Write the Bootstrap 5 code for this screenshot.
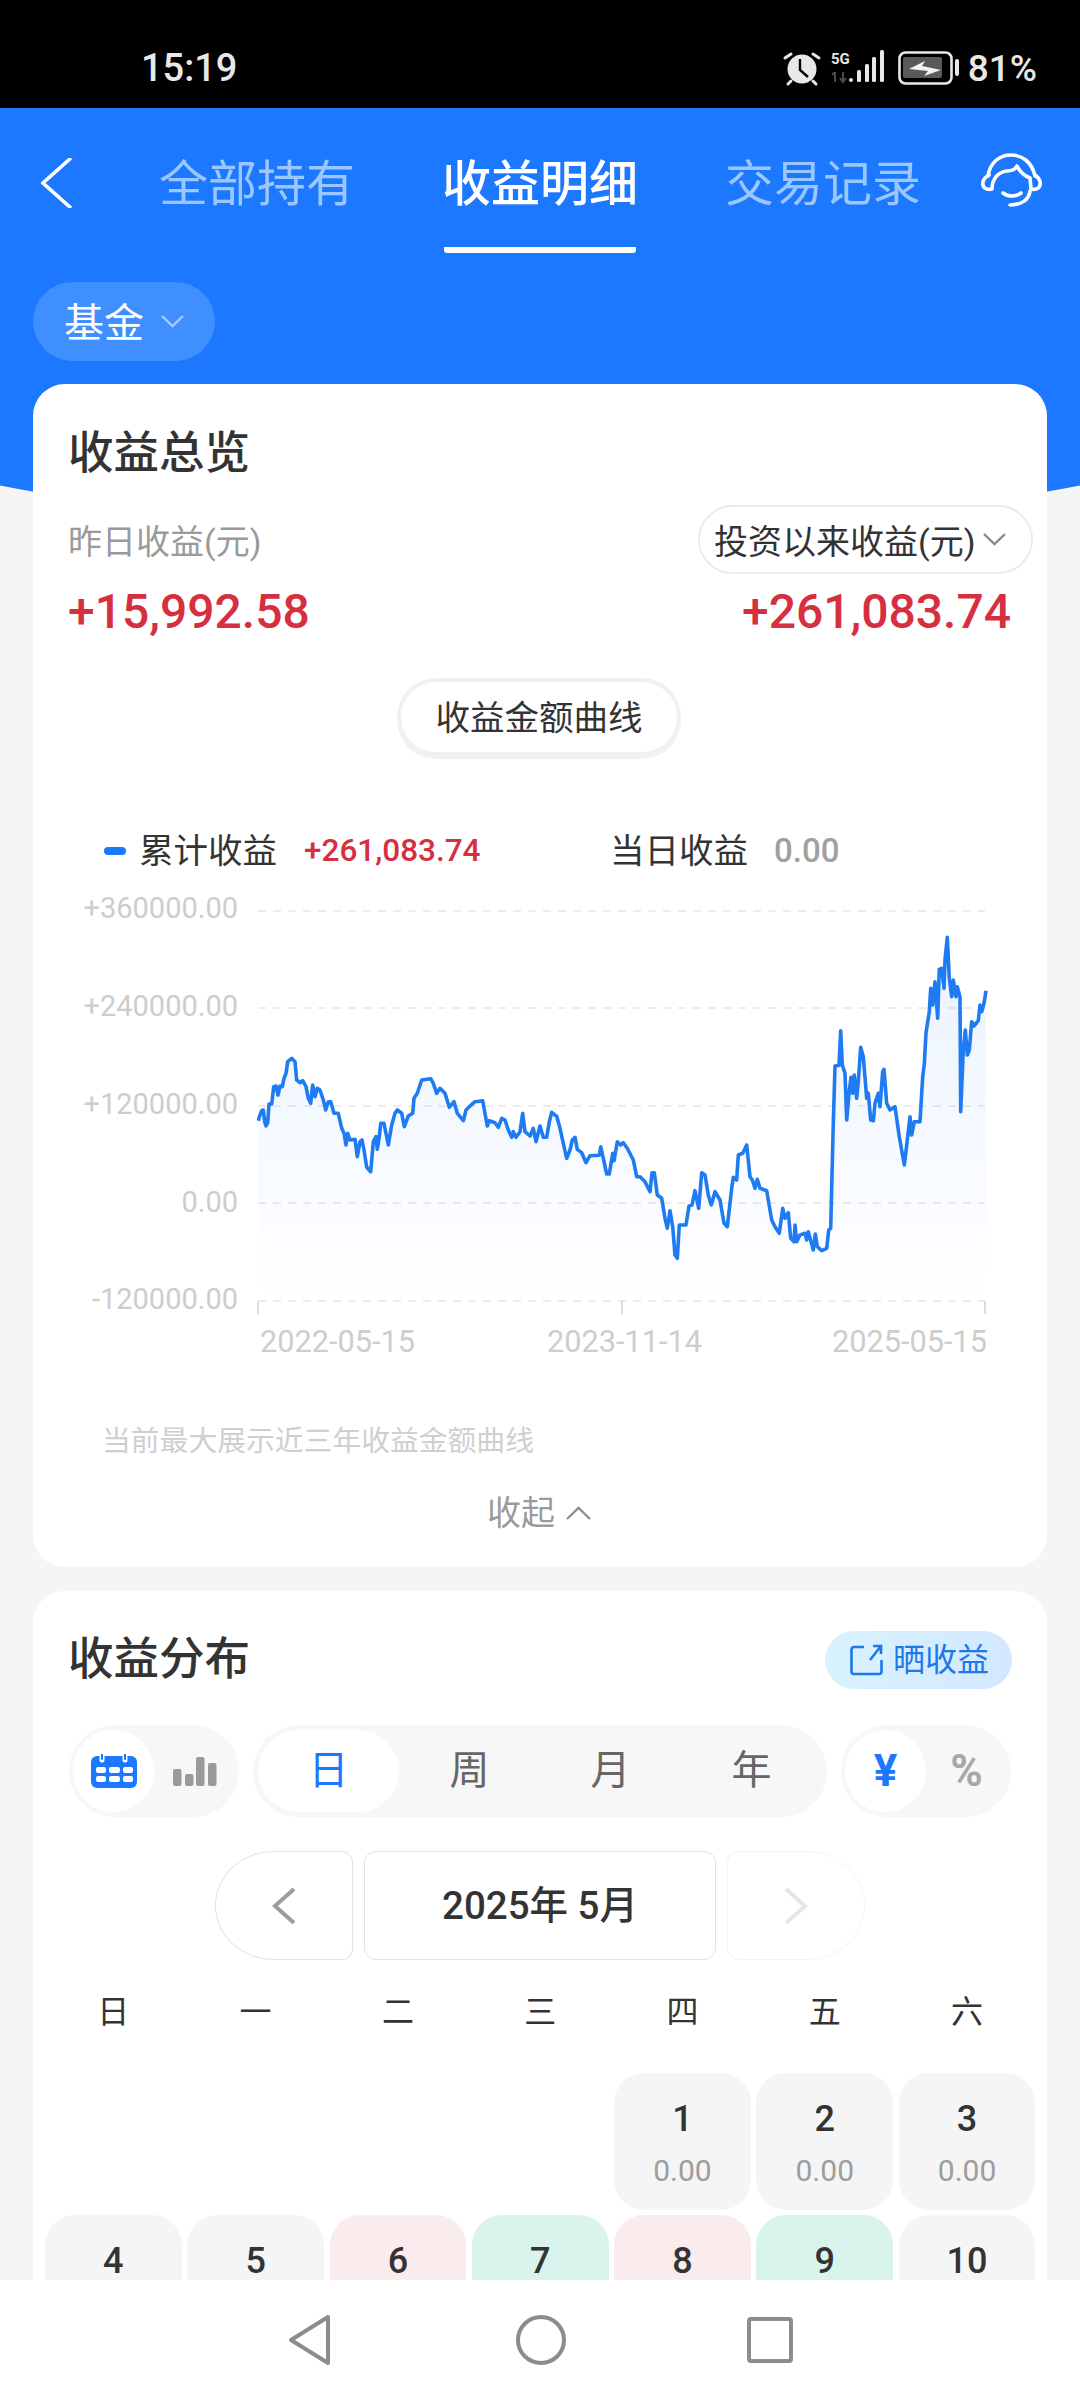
<!doctype html>
<html lang="zh-CN">
<head>
<meta charset="utf-8">
<title>收益明细</title>
<link href="https://cdn.jsdelivr.net/npm/bootstrap@5.3.0/dist/css/bootstrap.min.css" rel="stylesheet">
<style>
html,body{margin:0;background:#f5f5f5}
body{font-family:Roboto,"Noto Sans CJK SC",sans-serif;color:#333;width:1080px;height:2400px;overflow:hidden}
.app-shell{width:1080px;height:2400px}
.status-strip{height:108px;background:#000;color:#e8e8e8;padding:26px 43px 0 141px;flex:none}
.status-time{font-size:38px;font-weight:500;line-height:1;padding-top:2px}
.status-batt{font-size:37px;font-weight:500;line-height:1;margin-left:6px;padding-top:2px}
.scroll-area{flex:1 1 auto;min-height:0;overflow:hidden;background:#f5f5f5}
.blue-arc{position:absolute;left:-260px;top:0;width:1600px;height:422px;background:#1b78ff;border-radius:0 0 50% 50%/0 0 170px 170px}
.layer{z-index:1}
.tab-row{padding:50px 0 0 41px}
.tab-back{width:32px;height:50px;margin-right:88px;display:block}
.tab-item{font-size:49px;line-height:50px;width:192px;text-align:center;padding:2px 0 37px;border-bottom:6px solid transparent;color:#9cc6ff;margin-right:91px;white-space:nowrap;display:flex;justify-content:center}
.tab-item.is-on{color:#fff;font-weight:500;border-bottom-color:#fff;border-radius:0 0 3px 3px}
.tab-item.is-last{margin-right:62px}
.head-icon{margin-top:-5px}
.fund-pill{margin:29px 0 23px 33px;width:182px;height:79px;background:#408fff;color:#fff;font-size:40px;border:0;padding:5px 0 0 0;gap:17px}
.fund-pill svg{margin-top:-5px}
.fund-pill:hover{background:#408fff;color:#fff}
.panel{margin:0 33px;border-radius:32px;border:0;background:#fff}
.panel-a{padding:40px 37px 32px 35px}
.panel-b{margin-top:24px;padding:39px 12px 0}
.panel-title{font-size:45.500px;line-height:60px;font-weight:500;color:#333;margin:0}
.pick-row{margin-top:21px;height:69px}
.muted-label{font-size:34px;color:#9a9a9a;padding-top:5px}
.pick-pill{width:335px;height:69px;margin-right:-23px;border:2px solid #ececec;background:#fff;font-size:34px;color:#333;padding:5px 0 0 14px;gap:8px;white-space:nowrap}
.pick-pill svg{margin-top:-5px}
.big-row{margin:8px -1px 0 0;font-size:48px;line-height:60px;font-weight:500;color:#d62f40}
.curve-pill{width:276px;height:70px;margin:40px auto 0;background:#fff;font-size:34.500px;color:#333;border:0;padding:3px 0 0;box-shadow:0 0 0 4px #f1f1f1,0 3px 0 4px #f1f1f1}
.legend-row{margin:77px 0 0 36px;height:44px;font-size:34.500px;line-height:44px}
.legend-dot{width:22px;height:8px;border-radius:4px;background:#1b78ff;margin-right:13px}
.legend-red{font-size:31.500px;color:#d62f40;font-weight:500;margin-left:27px;width:306px}
.legend-zero{font-size:33px;color:#a0a0a0;font-weight:500;margin-left:26px}
.chart-box{display:block;width:1014px;height:490px;margin:7px -37px 0 -35px}
.chart-box text{font-family:Roboto,sans-serif;font-size:29px;fill:#cdcdcd}
.chart-box text.axis-date{font-size:30.700px}
.chart-note{margin:51px 0 0 34px;font-size:28.800px;line-height:40px;color:#cfcfcf}
.fold-row{margin-top:30px;font-size:34px;line-height:44px;color:#9a9a9a;gap:11px}
.share-pill{width:187px;height:58px;background:linear-gradient(90deg,#d9f2ff,#d3e8ff);color:#1f78e8;font-size:32px;border:0;padding:0 0 0 2px;gap:10px;margin-right:23px}
.head-row{padding-left:23px;height:60px}
.head-row .panel-title{line-height:56px}
.seg-wrap{padding:0 23px 0 24px;margin-top:35px;gap:14px}
.seg-group{height:92px;background:#f7f7f7;border-radius:46px;padding:5px 4px}
.seg-group.seg-mid{padding:5px}
.seg-cell{width:81px;height:82px;border-radius:41px;color:#666;font-size:40px}
.seg-wide{width:141px}
.seg-cell.is-on{background:#fff;color:#1b78ff}
.seg-sym{font-weight:700;font-size:44px;color:#a8a8a8}
.seg-sym.is-on{color:#1b78ff}
.date-row{margin-top:34px;gap:11px;height:109px}
.date-cell{width:352px;border:1px solid #e2e2e2;border-radius:12px;font-size:38.500px;font-weight:500;color:#333}
.date-side{width:138px;border:1px solid #e2e2e2}
.date-prev{border-radius:60px 12px 12px 60px/56px 12px 12px 56px}
.date-next{border-color:#f4f4f4;border-radius:12px 60px 60px 12px/12px 56px 56px 12px}
.week-grid,.day-grid{display:grid;grid-template-columns:repeat(7,136.700px);column-gap:5.600px}
.week-grid{margin-top:30px;font-size:32px;line-height:44px;text-align:center;color:#333}
.day-grid{margin-top:39px;row-gap:5px}
.day-cell{height:137px;border-radius:30px;background:#f5f5f5;text-align:center;padding-top:26px}
.day-num{font-size:36px;line-height:40px;font-weight:500;color:#333}
.day-val{font-size:30px;line-height:36px;color:#9d9d9d;margin-top:14px}
.tone-red{background:#faebed}
.tone-green{background:#d9f4ec}
.soft-nav{height:120px;background:#fff;flex:none}
.nav-mark-a{margin-right:183px}
.nav-mark-c{margin-left:180px}
</style>
</head>
<body>
<div class="app-shell d-flex flex-column">
  <div class="status-strip d-flex align-items-center">
    <span class="status-time">15:19</span>
    <svg class="ms-auto" width="180" height="40" viewBox="780 45 180 40" aria-hidden="true">
      <circle cx="800" cy="67" r="14.500" fill="#e8e8e8"/>
      <path d="M798 57v11l8 7" fill="none" stroke="#000" stroke-width="2.400"/>
      <path d="M783 56l6-4M817 56l-6-4M789 79l-3 3M811 79l3 3" stroke="#e8e8e8" stroke-width="3" stroke-linecap="round"/>
      <text x="829" y="62" fill="#e8e8e8" font-family="Roboto,sans-serif" font-weight="700" font-size="15">5G</text>
      <path d="M833 70v10M830 73l3-3M841 70v10M838 76l3 4 3-4" fill="none" stroke="#4a4a4a" stroke-width="2"/>
      <g fill="#e8e8e8"><rect x="847" y="76" width="4" height="4" rx="2"/><rect x="855" y="68" width="4" height="12" rx="1.500"/><rect x="863" y="62" width="4" height="18" rx="1.500"/><rect x="870" y="55" width="4" height="25" rx="1.500"/><rect x="878" y="48" width="4" height="32" rx="1.500"/></g>
      <rect x="897.500" y="50.500" width="52" height="31" rx="6" fill="none" stroke="#e8e8e8" stroke-width="2.600"/>
      <rect x="901" y="55" width="39" height="21" rx="2" fill="#5a5a5a"/>
      <path d="M907 67l16-8-3 5 19 4-17 6 4-5z" fill="#f2f2f2"/>
      <rect x="953" y="57" width="4" height="17" rx="2" fill="#e8e8e8"/>
    </svg>
    <span class="status-batt">81%</span>
  </div>

  <div class="scroll-area position-relative">
    <div class="blue-arc"></div>
    <div class="layer position-relative">
      <div class="tab-row d-flex align-items-start">
        <svg class="tab-back" viewBox="0 0 32 50" aria-hidden="true"><path d="M30 0L2 25l28 25" fill="none" stroke="#fff" stroke-width="3.600"/></svg>
        <div class="tab-item">全部持有</div>
        <div class="tab-item is-on">收益明细</div>
        <div class="tab-item is-last">交易记录</div>
        <svg class="head-icon" width="62" height="56" viewBox="0 0 62 56" aria-hidden="true">
          <g fill="none" stroke="#fff" stroke-width="3.600" stroke-linecap="round" stroke-linejoin="round">
            <path d="M7 23C9 9 19 2 30 2s21 7 24 21"/>
            <path d="M8 22C3 25 1 28 2 32c1 4 5 5 9 4 0-10 6-17 15-18 4 0 8-1 10-5 3 6 8 10 13 12l1 11c4 1 8 0 9-4 1-4-1-7-5-10"/>
            <path d="M22 40c5 4 13 4 18 0"/>
            <path d="M49 38c-1 9-9 14-20 14"/>
          </g>
        </svg>
      </div>
      <button type="button" class="btn rounded-pill fund-pill d-flex align-items-center justify-content-center">基金
        <svg width="23" height="13" viewBox="0 0 23 13" aria-hidden="true"><path d="M1 1l10.500 10L22 1" fill="none" stroke="#a9cdff" stroke-width="2.400"/></svg>
      </button>

      <section class="card panel panel-a">
        <h2 class="panel-title">收益总览</h2>
        <div class="pick-row d-flex justify-content-between align-items-center">
          <span class="muted-label">昨日收益(元)</span>
          <button type="button" class="btn rounded-pill pick-pill d-flex align-items-center">投资以来收益(元)
            <svg width="23" height="13" viewBox="0 0 23 13" aria-hidden="true"><path d="M1 1l10.500 10L22 1" fill="none" stroke="#8a8a8a" stroke-width="2.400"/></svg>
          </button>
        </div>
        <div class="big-row d-flex justify-content-between"><span>+15,992.58</span><span>+261,083.74</span></div>
        <button type="button" class="btn rounded-pill curve-pill d-block">收益金额曲线</button>
        <div class="legend-row d-flex align-items-center">
          <span class="legend-dot"></span><span>累计收益</span>
          <span class="legend-red">+261,083.74</span><span>当日收益</span><span class="legend-zero">0.00</span>
        </div>
        <svg class="chart-box" viewBox="33 880 1014 490" role="img" aria-label="收益金额曲线">
          <defs>
            <linearGradient id="areaFill" gradientUnits="userSpaceOnUse" x1="0" y1="940" x2="0" y2="1301">
              <stop offset="0" stop-color="#1b78ff" stop-opacity=".09"/>
              <stop offset="1" stop-color="#1b78ff" stop-opacity="0"/>
            </linearGradient>
          </defs>
          <g stroke="#e6e6e6" stroke-width="1.600" stroke-dasharray="8 7">
            <path d="M258 911H985M258 1008H985M258 1106H985M258 1203H985M258 1301H985"/>
          </g>
          <path d="M258 1301v13M622 1301v13M985 1301v13" stroke="#dcdcdc" stroke-width="2"/>
          <g text-anchor="end">
            <text x="238" y="918">+360000.00</text>
            <text x="238" y="1016">+240000.00</text>
            <text x="238" y="1114">+120000.00</text>
            <text x="238" y="1212">0.00</text>
            <text x="238" y="1309">-120000.00</text>
          </g>
          <text class="axis-date" x="260" y="1352">2022-05-15</text>
          <text class="axis-date" x="547" y="1352">2023-11-14</text>
          <text class="axis-date" x="832" y="1352">2025-05-15</text>
          <path fill="url(#areaFill)" d="M258.300 1120.700L260 1115 261.700 1110.700 263.300 1110 264.700 1121.700 266 1126 267.700 1122.700 269 1104 271.700 1104 273.700 1086.700 276 1086 278 1095 280 1086 282.300 1086.700 284 1078.300 286 1073.300 287.700 1061.700 291.700 1058.300 295 1061.700 296.700 1080 300 1082.700 302.700 1080.700 306 1086.700 308.300 1098.300 310.700 1103.300 312.700 1085 315 1096.700 317.300 1088.300 320 1090 323.300 1100 325.700 1110 328.300 1101.700 330.700 1101.700 334 1113.300 338.300 1113.300 341.700 1128.300 344 1133.300 346 1145 347.700 1133.300 350 1140 355 1139.300 357.300 1156.700 360 1141.700 362 1140 364 1150 366.700 1167.300 370.700 1171.700 373.300 1141.700 376 1136.700 377.300 1149.300 379.300 1136.700 380.700 1123.300 384 1123.300 388.300 1145 391.700 1125 395 1113.300 397.300 1110 401.700 1113.300 404.300 1126.700 408.300 1116 412.700 1113.300 414 1098.300 417.300 1093.300 421.700 1080 430.700 1078.700 433.300 1083.300 436.700 1093.300 440 1088.300 445 1093.300 449.300 1107.300 454 1101.700 457.300 1113.300 463.300 1120.700 466 1110 469.300 1106.700 475 1101.700 482.700 1100.700 487.300 1126 489.300 1120.700 495 1122.700 498.300 1127.300 501.700 1118.300 505 1120 508.300 1130 511.700 1137.300 513.300 1131.700 516 1137.300 520 1131.700 522.700 1113.300 525 1131.700 530 1136 533.300 1128.300 536 1141.700 540 1126 543.300 1137.300 546.700 1137.300 549.300 1121.700 551.700 1112.300 556.700 1116.300 560 1128.300 563.300 1143.300 566.700 1158.300 570 1150 572.300 1140 575 1137.300 577.300 1149.300 581.700 1152.700 586 1162.700 590 1155.700 599.300 1155.300 600.700 1146.700 603.300 1158.300 606.700 1174 609.300 1174 612.700 1153.300 614 1160.700 617.300 1141.700 620.700 1145 623.300 1142.700 627.300 1148.300 633.300 1160 636.700 1176.700 640 1176.700 645 1181.700 650 1191.700 652 1172.700 654.300 1172.700 657.300 1195 661.700 1198.300 665 1218.300 667.300 1228.300 670 1210.700 672.700 1226.700 675 1255 677.300 1258.300 679.300 1225 686 1225 689 1206 692 1205 695 1190.700 698.700 1208.300 701.700 1172.700 705 1175 708.300 1195 711.300 1205 715 1191.700 720 1200 724 1223.300 727.300 1226.700 731.700 1188.300 733.300 1177.300 736.700 1180 738.300 1155 742.700 1153.300 746.700 1145 750 1176.700 752.300 1180 755 1188.300 757.300 1179.300 760 1188.300 766.700 1190.700 771.700 1220 775 1226.700 779.300 1233.300 782.700 1208.300 785 1218.300 788.300 1212.700 790.700 1238.300 794 1241.700 795 1225 796.700 1241.700 800 1235 805 1233.300 806.700 1240 808.300 1231.700 813.300 1250 815.300 1234 817.300 1246.700 821.700 1250.700 826.700 1248.300 828.700 1230 830.700 1228.300 833.300 1123.300 835 1066 839 1065.300 840.700 1030.700 842.300 1065 845 1073.300 846.700 1120 849 1093.300 851 1077.300 852.700 1093.300 854.300 1075 856.700 1098.300 858.300 1081.700 860.700 1047.300 863.300 1056.700 866.700 1098.300 868.300 1093.300 870.700 1120 873.300 1120.700 875 1103.300 878.300 1093.300 880 1106.700 882.700 1071.700 884 1069.300 886.700 1103.300 890 1110 895 1106.700 899.300 1136.700 904.300 1165 906.700 1145 910 1116.700 911.700 1135 914.300 1121.700 920 1121.700 922.700 1076.700 924.300 1064 926 1032.700 929.300 1011.700 930.700 988.300 932.700 1005 935 981.700 937.700 1018.300 939.300 969.300 941.700 968.300 944 988.300 945 960 947.300 937.300 949.300 978.300 951.700 996.700 953.300 980 956 996.700 957.300 986.700 960 997.300 960.700 1111.700 963.300 1050 965.300 1030 967.300 1055 969.300 1050 971.700 1021.700 974 1026 978.300 1020.700 980 1005 981.700 1011.700 984 1003.300 986 990.700V1301H258.300Z"/>
          <path fill="none" stroke="#1f7bf2" stroke-width="3.600" stroke-linejoin="round" d="M258.300 1120.700L260 1115 261.700 1110.700 263.300 1110 264.700 1121.700 266 1126 267.700 1122.700 269 1104 271.700 1104 273.700 1086.700 276 1086 278 1095 280 1086 282.300 1086.700 284 1078.300 286 1073.300 287.700 1061.700 291.700 1058.300 295 1061.700 296.700 1080 300 1082.700 302.700 1080.700 306 1086.700 308.300 1098.300 310.700 1103.300 312.700 1085 315 1096.700 317.300 1088.300 320 1090 323.300 1100 325.700 1110 328.300 1101.700 330.700 1101.700 334 1113.300 338.300 1113.300 341.700 1128.300 344 1133.300 346 1145 347.700 1133.300 350 1140 355 1139.300 357.300 1156.700 360 1141.700 362 1140 364 1150 366.700 1167.300 370.700 1171.700 373.300 1141.700 376 1136.700 377.300 1149.300 379.300 1136.700 380.700 1123.300 384 1123.300 388.300 1145 391.700 1125 395 1113.300 397.300 1110 401.700 1113.300 404.300 1126.700 408.300 1116 412.700 1113.300 414 1098.300 417.300 1093.300 421.700 1080 430.700 1078.700 433.300 1083.300 436.700 1093.300 440 1088.300 445 1093.300 449.300 1107.300 454 1101.700 457.300 1113.300 463.300 1120.700 466 1110 469.300 1106.700 475 1101.700 482.700 1100.700 487.300 1126 489.300 1120.700 495 1122.700 498.300 1127.300 501.700 1118.300 505 1120 508.300 1130 511.700 1137.300 513.300 1131.700 516 1137.300 520 1131.700 522.700 1113.300 525 1131.700 530 1136 533.300 1128.300 536 1141.700 540 1126 543.300 1137.300 546.700 1137.300 549.300 1121.700 551.700 1112.300 556.700 1116.300 560 1128.300 563.300 1143.300 566.700 1158.300 570 1150 572.300 1140 575 1137.300 577.300 1149.300 581.700 1152.700 586 1162.700 590 1155.700 599.300 1155.300 600.700 1146.700 603.300 1158.300 606.700 1174 609.300 1174 612.700 1153.300 614 1160.700 617.300 1141.700 620.700 1145 623.300 1142.700 627.300 1148.300 633.300 1160 636.700 1176.700 640 1176.700 645 1181.700 650 1191.700 652 1172.700 654.300 1172.700 657.300 1195 661.700 1198.300 665 1218.300 667.300 1228.300 670 1210.700 672.700 1226.700 675 1255 677.300 1258.300 679.300 1225 686 1225 689 1206 692 1205 695 1190.700 698.700 1208.300 701.700 1172.700 705 1175 708.300 1195 711.300 1205 715 1191.700 720 1200 724 1223.300 727.300 1226.700 731.700 1188.300 733.300 1177.300 736.700 1180 738.300 1155 742.700 1153.300 746.700 1145 750 1176.700 752.300 1180 755 1188.300 757.300 1179.300 760 1188.300 766.700 1190.700 771.700 1220 775 1226.700 779.300 1233.300 782.700 1208.300 785 1218.300 788.300 1212.700 790.700 1238.300 794 1241.700 795 1225 796.700 1241.700 800 1235 805 1233.300 806.700 1240 808.300 1231.700 813.300 1250 815.300 1234 817.300 1246.700 821.700 1250.700 826.700 1248.300 828.700 1230 830.700 1228.300 833.300 1123.300 835 1066 839 1065.300 840.700 1030.700 842.300 1065 845 1073.300 846.700 1120 849 1093.300 851 1077.300 852.700 1093.300 854.300 1075 856.700 1098.300 858.300 1081.700 860.700 1047.300 863.300 1056.700 866.700 1098.300 868.300 1093.300 870.700 1120 873.300 1120.700 875 1103.300 878.300 1093.300 880 1106.700 882.700 1071.700 884 1069.300 886.700 1103.300 890 1110 895 1106.700 899.300 1136.700 904.300 1165 906.700 1145 910 1116.700 911.700 1135 914.300 1121.700 920 1121.700 922.700 1076.700 924.300 1064 926 1032.700 929.300 1011.700 930.700 988.300 932.700 1005 935 981.700 937.700 1018.300 939.300 969.300 941.700 968.300 944 988.300 945 960 947.300 937.300 949.300 978.300 951.700 996.700 953.300 980 956 996.700 957.300 986.700 960 997.300 960.700 1111.700 963.300 1050 965.300 1030 967.300 1055 969.300 1050 971.700 1021.700 974 1026 978.300 1020.700 980 1005 981.700 1011.700 984 1003.300 986 990.700"/>
        </svg>
        <div class="chart-note">当前最大展示近三年收益金额曲线</div>
        <div class="fold-row d-flex justify-content-center align-items-center">收起
          <svg width="25" height="14" viewBox="0 0 25 14" aria-hidden="true"><path d="M1 13L12.500 2 24 13" fill="none" stroke="#8f8f8f" stroke-width="2.400"/></svg>
        </div>
      </section>

      <section class="card panel panel-b">
        <div class="head-row d-flex justify-content-between align-items-center">
          <h2 class="panel-title">收益分布</h2>
          <button type="button" class="btn rounded-pill share-pill d-flex align-items-center justify-content-center">
            <svg width="33" height="32" viewBox="0 0 33 32" aria-hidden="true"><path d="M14 3H4a2.500 2.500 0 0 0-2.500 2.500v22A2.500 2.500 0 0 0 4 30h25a2.500 2.500 0 0 0 2.500-2.500V16M20 16L31 2M23 2h8v8" fill="none" stroke="#1f78e8" stroke-width="2.600"/></svg>
            晒收益
          </button>
        </div>
        <div class="seg-wrap d-flex">
          <div class="seg-group d-flex">
            <div class="seg-cell is-on d-flex align-items-center justify-content-center">
              <svg width="46" height="34" viewBox="0 0 46 34" aria-hidden="true">
                <rect y="2" width="46" height="32" rx="6" fill="#1b78ff"/>
                <path d="M11 0v6M34 0v6" stroke="#fff" stroke-width="5" stroke-linecap="round"/>
                <path d="M11 0v5M34 0v5" stroke="#1b78ff" stroke-width="2" stroke-linecap="round"/>
                <g fill="#fff"><rect x="5" y="13" width="10" height="6" rx="2"/><rect x="18" y="13" width="11" height="6" rx="2"/><rect x="32" y="13" width="10" height="6" rx="2"/><rect x="5" y="22" width="10" height="6" rx="2"/><rect x="18" y="22" width="11" height="6" rx="2"/><rect x="32" y="22" width="10" height="6" rx="2"/></g>
              </svg>
            </div>
            <div class="seg-cell d-flex align-items-center justify-content-center">
              <svg width="44" height="29" viewBox="0 0 44 29" aria-hidden="true"><g fill="#9a9a9a"><rect y="12" width="8.500" height="17" rx="2"/><rect x="12" y="17" width="8.500" height="12" rx="2"/><rect x="23" width="8.500" height="29" rx="2"/><rect x="35" y="6" width="8.500" height="23" rx="2"/></g></svg>
            </div>
          </div>
          <div class="seg-group seg-mid d-flex">
            <div class="seg-cell seg-wide is-on d-flex align-items-center justify-content-center">日</div>
            <div class="seg-cell seg-wide d-flex align-items-center justify-content-center">周</div>
            <div class="seg-cell seg-wide d-flex align-items-center justify-content-center">月</div>
            <div class="seg-cell seg-wide d-flex align-items-center justify-content-center">年</div>
          </div>
          <div class="seg-group d-flex">
            <div class="seg-cell is-on seg-sym d-flex align-items-center justify-content-center">¥</div>
            <div class="seg-cell seg-sym d-flex align-items-center justify-content-center">%</div>
          </div>
        </div>
        <div class="date-row d-flex justify-content-center">
          <div class="date-side date-prev d-flex align-items-center justify-content-center">
            <svg width="24" height="36" viewBox="0 0 24 36" aria-hidden="true"><path d="M22 1L3 18l19 17" fill="none" stroke="#9d9d9d" stroke-width="4"/></svg>
          </div>
          <div class="date-cell d-flex align-items-center justify-content-center">2025年 5月</div>
          <div class="date-side date-next d-flex align-items-center justify-content-center">
            <svg width="24" height="36" viewBox="0 0 24 36" aria-hidden="true"><path d="M2 1l19 17L2 35" fill="none" stroke="#e6e6e6" stroke-width="4"/></svg>
          </div>
        </div>
        <div class="week-grid"><div>日</div><div>一</div><div>二</div><div>三</div><div>四</div><div>五</div><div>六</div></div>
        <div class="day-grid">
          <div></div><div></div><div></div><div></div>
          <div class="day-cell"><div class="day-num">1</div><div class="day-val">0.00</div></div>
          <div class="day-cell"><div class="day-num">2</div><div class="day-val">0.00</div></div>
          <div class="day-cell"><div class="day-num">3</div><div class="day-val">0.00</div></div>
          <div class="day-cell"><div class="day-num">4</div></div>
          <div class="day-cell"><div class="day-num">5</div></div>
          <div class="day-cell tone-red"><div class="day-num">6</div></div>
          <div class="day-cell tone-green"><div class="day-num">7</div></div>
          <div class="day-cell tone-red"><div class="day-num">8</div></div>
          <div class="day-cell tone-green"><div class="day-num">9</div></div>
          <div class="day-cell"><div class="day-num">10</div></div>
        </div>
      </section>
    </div>
  </div>

  <div class="soft-nav d-flex align-items-center justify-content-center">
    <svg class="nav-mark-a" width="44" height="52" viewBox="0 0 44 52" aria-hidden="true"><path d="M40 3L3 26l37 23z" fill="none" stroke="#8c8c8c" stroke-width="4" stroke-linejoin="round"/></svg>
    <svg width="52" height="52" viewBox="0 0 52 52" aria-hidden="true"><circle cx="26" cy="26" r="23" fill="none" stroke="#8c8c8c" stroke-width="4"/></svg>
    <svg class="nav-mark-c" width="46" height="46" viewBox="0 0 46 46" aria-hidden="true"><rect x="2" y="2" width="42" height="42" rx="2" fill="none" stroke="#8c8c8c" stroke-width="4"/></svg>
  </div>
</div>
</body>
</html>
